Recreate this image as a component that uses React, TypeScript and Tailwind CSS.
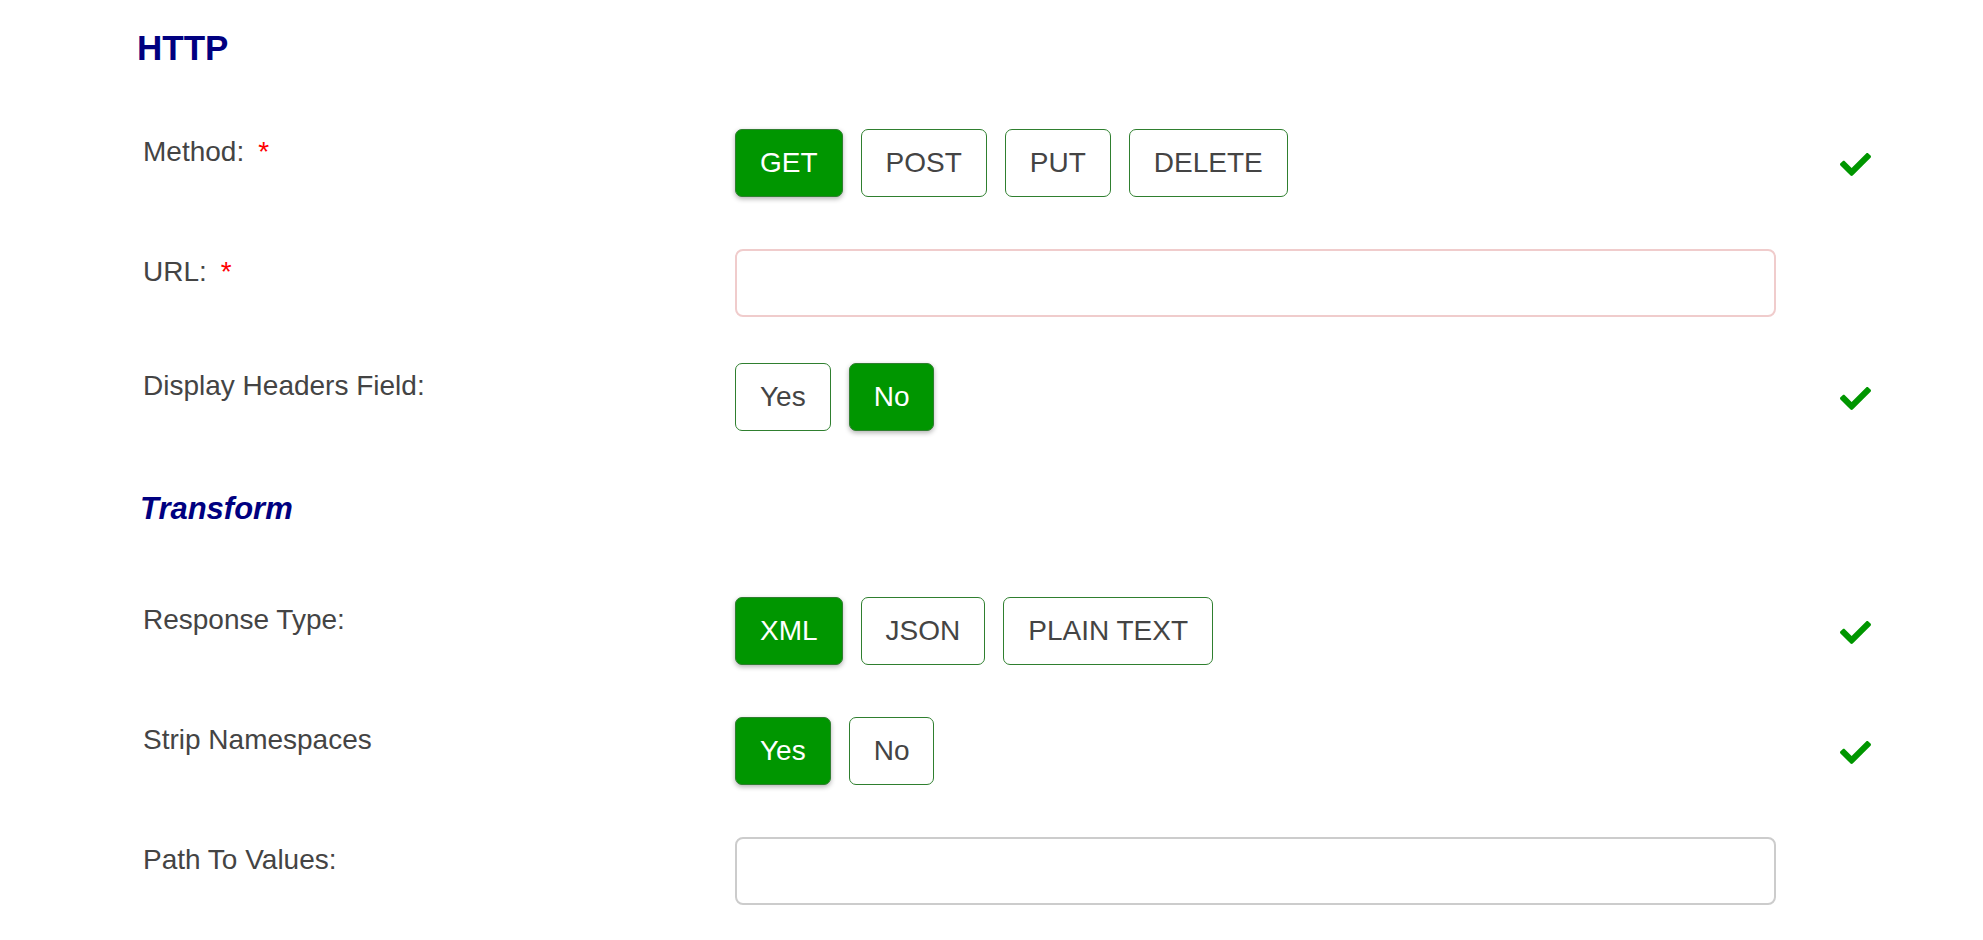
import React, { useState } from 'react';
import { FaCheck } from 'react-icons/fa';

const FONT = { fontFamily: '"Liberation Sans", Arial, sans-serif' };

type ToggleProps = {
  options: string[];
  value: string;
  onChange: (v: string) => void;
};

const ToggleGroup: React.FC<ToggleProps> = ({ options, value, onChange }) => (
  <div className="flex gap-[18px]">
    {options.map((opt) => (
      <button
        key={opt}
        type="button"
        onClick={() => onChange(opt)}
        className={`h-[68px] px-[24px] rounded-[7px] border-[1.5px] border-[#2f7f2f] text-[28px] leading-none ${
          opt === value
            ? 'bg-[#009600] text-white shadow-[0_2px_5px_rgba(0,0,0,0.3)]'
            : 'bg-white text-[#444]'
        }`}
      >
        {opt}
      </button>
    ))}
  </div>
);

const Row: React.FC<{
  label: string;
  required?: boolean;
  valid?: boolean;
  className?: string;
  children: React.ReactNode;
}> = ({ label, required, valid, className = 'mb-[52px]', children }) => (
  <div className={`flex items-start ${className}`}>
    <div className="w-[592px] shrink-0 text-[28px] leading-[45px] text-[#444]">
      {label}
      {required && <span className="ml-[14px] text-[#ff0000]">*</span>}
    </div>
    <div className="w-[1041px] shrink-0">{children}</div>
    <div className="h-[68px] flex items-center pl-[64px]">
      {valid && <FaCheck className="text-[#009600] w-[31px] h-[31px] mt-[3px]" />}
    </div>
  </div>
);

export default function App() {
  const [method, setMethod] = useState('GET');
  const [headers, setHeaders] = useState('No');
  const [respType, setRespType] = useState('XML');
  const [strip, setStrip] = useState('Yes');
  const [url, setUrl] = useState('');
  const [path, setPath] = useState('');

  return (
    <div className="min-h-screen bg-white pl-[137px]" style={FONT}>
      {/* HTTP section */}
      <h3 className="pt-[28px] text-[35px] leading-[40px] font-bold text-[#000080] mb-[61px]">HTTP</h3>

      <div className="pl-[6px]">
        <Row label="Method:" required valid>
          <ToggleGroup options={['GET', 'POST', 'PUT', 'DELETE']} value={method} onChange={setMethod} />
        </Row>

        <Row label="URL:" required className="mb-[46px]">
          <input
            value={url}
            onChange={(e) => setUrl(e.target.value)}
            className="block w-full h-[68px] rounded-[8px] border-2 border-[#f0cccc] px-4 text-[28px] outline-none"
          />
        </Row>

        <Row label="Display Headers Field:" valid className="mb-[60px]">
          <ToggleGroup options={['Yes', 'No']} value={headers} onChange={setHeaders} />
        </Row>
      </div>

      {/* Transform section */}
      <h4 className="pl-[3px] text-[31px] leading-[36px] font-bold italic text-[#000080] mb-[70px]">Transform</h4>

      <div className="pl-[6px]">
        <Row label="Response Type:" valid>
          <ToggleGroup options={['XML', 'JSON', 'PLAIN TEXT']} value={respType} onChange={setRespType} />
        </Row>

        <Row label="Strip Namespaces" valid>
          <ToggleGroup options={['Yes', 'No']} value={strip} onChange={setStrip} />
        </Row>

        <Row label="Path To Values:" className="mb-[40px]">
          <input
            value={path}
            onChange={(e) => setPath(e.target.value)}
            className="block w-full h-[68px] rounded-[8px] border-2 border-[#cccccc] px-4 text-[28px] outline-none"
          />
        </Row>
      </div>
    </div>
  );
}
